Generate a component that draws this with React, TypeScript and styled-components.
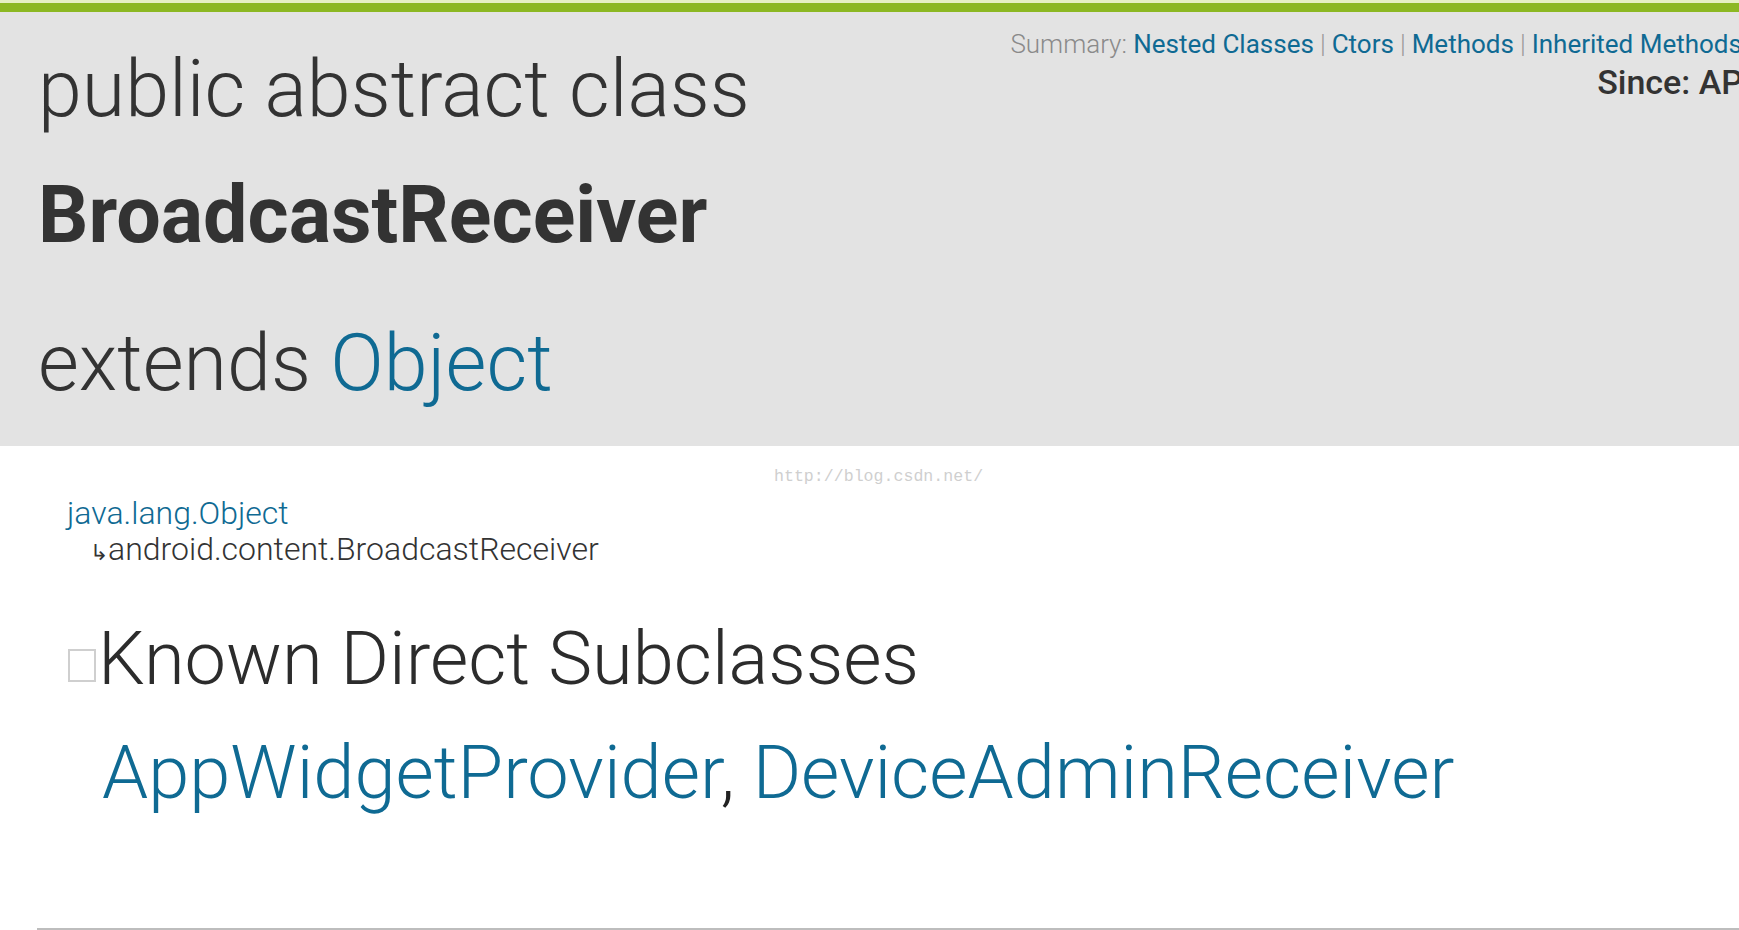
import React from 'react';
import styled, { createGlobalStyle } from 'styled-components';

const GlobalStyle = createGlobalStyle`
  html, body {
    margin: 0;
    padding: 0;
    background: #ffffff;
    overflow: hidden;
  }
  body {
    font-family: Roboto, "Liberation Sans", sans-serif;
    color: #333333;
  }
`;

const LINK = '#0f6a93';

const Page = styled.div`
  width: 1739px;
  height: 930px;
  position: relative;
  overflow: hidden;
  background: #ffffff;
`;

const TopBar = styled.div`
  height: 9px;
  background: #8cb823;
  border-top: 3px solid #e6f0c4;
`;

const Header = styled.header`
  display: flex;
  justify-content: space-between;
  align-items: flex-start;
  height: 434px;
  box-sizing: border-box;
  padding: 15px 0 0 38px;
  background: #e3e3e3;
`;

const TitleColumn = styled.div`
  padding-top: 12px;
  white-space: nowrap;
`;

const TitleLine = styled.div<{ $bold?: boolean; $gap?: number }>`
  font-size: 79px;
  line-height: 100px;
  font-weight: ${(p) => (p.$bold ? 700 : 300)};
  color: #333333;
  margin-top: ${(p) => p.$gap ?? 0}px;
`;

const Link = styled.a`
  color: ${LINK};
  text-decoration: none;
`;

const Meta = styled.div`
  display: flex;
  flex-direction: column;
  align-items: flex-end;
  white-space: nowrap;
  margin-right: -156px;
`;

const SummaryLine = styled.div`
  font-size: 26px;
  line-height: 34px;
  font-weight: 300;
  color: #8a8a8a;
`;

const SummaryLink = styled.a`
  color: ${LINK};
  font-weight: 400;
  text-decoration: none;
`;

const Sep = styled.span`
  color: #9a9a9a;
  margin: 0 6px;
`;

const Since = styled.div`
  font-size: 34px;
  line-height: 40px;
  font-weight: 500;
  color: #333333;
  margin-top: 1px;
  padding-right: 36px;
`;

const Body = styled.main`
  padding: 49px 0 0 67px;
`;

const Hierarchy = styled.div`
  font-size: 32px;
  line-height: 36px;
  font-weight: 300;
`;

const Child = styled.div`
  padding-left: 23px;
  color: #333333;
`;

const Arrow = styled.span`
  display: inline-block;
  font-size: 22px;
  margin-right: 0;
`;

const SectionTitle = styled.h2`
  display: flex;
  align-items: baseline;
  margin: 48px 0 0 0;
  font-size: 74px;
  line-height: 80px;
  font-weight: 300;
  color: #2c2c2c;
`;

const Toggle = styled.span`
  display: inline-block;
  width: 24px;
  height: 29px;
  border: 2px solid #cfcfcf;
  margin: 0 2px 0 1px;
  transform: translateY(-2px);
`;

const Subclasses = styled.div`
  margin: 32px 0 0 35px;
  font-size: 74px;
  line-height: 84px;
  font-weight: 300;
  color: #222222;
  white-space: nowrap;
`;

const BottomRule = styled.div`
  position: absolute;
  left: 37px;
  right: 0;
  bottom: 0;
  height: 2px;
  background: #bdbdbd;
`;

const Watermark = styled.div`
  position: absolute;
  left: 774px;
  top: 467px;
  font-family: "Liberation Mono", monospace;
  font-size: 16.6px;
  color: #cfcfcf;
`;

export default function App() {
  return (
    <Page>
      <GlobalStyle />
      <TopBar />
      <Header>
        <TitleColumn>
          <TitleLine>public abstract class</TitleLine>
          <TitleLine $bold $gap={26}>BroadcastReceiver</TitleLine>
          <TitleLine $gap={48}>
            extends <Link href="#">Object</Link>
          </TitleLine>
        </TitleColumn>
        <Meta>
          <SummaryLine>
            Summary: <SummaryLink href="#">Nested Classes</SummaryLink>
            <Sep>|</Sep>
            <SummaryLink href="#">Ctors</SummaryLink>
            <Sep>|</Sep>
            <SummaryLink href="#">Methods</SummaryLink>
            <Sep>|</Sep>
            <SummaryLink href="#">Inherited Methods</SummaryLink>
            <Sep>|</Sep>
            <SummaryLink href="#">[Expand All]</SummaryLink>
          </SummaryLine>
          <Since>Since: API level 1</Since>
        </Meta>
      </Header>
      <Body>
        <Hierarchy>
          <Link href="#">java.lang.Object</Link>
          <Child>
            <Arrow>↳</Arrow>android.content.BroadcastReceiver
          </Child>
        </Hierarchy>
        <SectionTitle>
          <Toggle />
          Known Direct Subclasses
        </SectionTitle>
        <Subclasses>
          <Link href="#">AppWidgetProvider</Link>, <Link href="#">DeviceAdminReceiver</Link>
        </Subclasses>
      </Body>
      <Watermark>http://blog.csdn.net/</Watermark>
      <BottomRule />
    </Page>
  );
}
